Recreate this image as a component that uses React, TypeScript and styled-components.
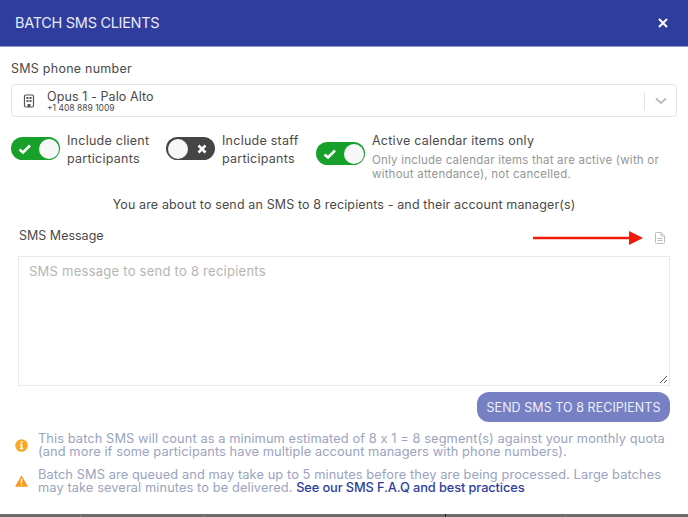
import React from "react";
import styled, { createGlobalStyle } from "styled-components";

const Global = createGlobalStyle`
  html, body { margin: 0; padding: 0; background: #fff; }
  body { font-family: Inter, "Open Sans", "Liberation Sans", sans-serif; }
  * { box-sizing: border-box; }
`;

const Page = styled.div`
  width: 688px;
  height: 517px;
  display: flex;
  flex-direction: column;
  overflow: hidden;
  background: #fff;
`;

const Header = styled.header`
  height: 47px;
  flex: none;
  background: #2f3e9e;
  border-bottom: 1px solid #8f98d0;
  display: flex;
  align-items: center;
  justify-content: space-between;
  padding: 0 17px 1px 15px;
  color: #e8eaf6;
  font-size: 14.5px;
  letter-spacing: -0.3px;
`;

const CloseButton = styled.span`
  display: flex;
  width: 16px;
  height: 16px;
  color: #fff;
`;

const Body = styled.main`
  flex: 1;
  display: flex;
  flex-direction: column;
  padding: 14px 11px 0;
`;

const FieldLabel = styled.div`
  font-size: 12.5px;
  line-height: 16px;
  color: #4a4a4a;
  letter-spacing: 0.25px;
`;

const Select = styled.div`
  margin-top: 7px;
  height: 33px;
  border: 1px solid #e4e4e4;
  border-radius: 4px;
  display: flex;
  align-items: center;
  padding-left: 12px;
`;

const SelectIcon = styled.span`
  display: flex;
  width: 12px;
  height: 14px;
  margin-left: -1px;
  margin-right: 12px;
  color: #555;
`;

const SelectText = styled.div`
  flex: 1;
  display: flex;
  flex-direction: column;
  padding-top: 2px;
  color: #4a4a4a;
`;

const SelectName = styled.div`
  font-size: 12.5px;
  line-height: 12px;
  letter-spacing: 0.1px;
`;

const SelectPhone = styled.div`
  font-size: 8.5px;
  line-height: 9px;
  margin-top: 1px;
`;

const Chevron = styled.div`
  width: 32px;
  height: 18px;
  border-left: 1px solid #e4e4e4;
  display: flex;
  align-items: center;
  justify-content: center;
  color: #bdbdbd;
`;

const OptionsRow = styled.div`
  display: flex;
  margin-top: 14px;
  height: 52px;
`;

const Option = styled.div<{ $width: number }>`
  width: ${(p) => p.$width}px;
  flex: none;
  display: flex;
  align-items: flex-start;
  gap: 7px;
`;

const Track = styled.div<{ $on: boolean; $top: number }>`
  width: 49px;
  height: 23px;
  flex: none;
  margin-top: ${(p) => p.$top}px;
  border-radius: 12px;
  background: ${(p) => (p.$on ? "#17a12b" : "#454545")};
  display: flex;
  flex-direction: ${(p) => (p.$on ? "row" : "row-reverse")};
  align-items: center;
  justify-content: space-between;
  padding: 0 1.5px;
  color: #fff;
`;

const Knob = styled.div`
  width: 20px;
  height: 20px;
  border-radius: 50%;
  background: #f7f7f7;
`;

const MarkSlot = styled.span`
  display: flex;
  width: 24px;
  justify-content: center;
`;

const OptionTitle = styled.div`
  padding-top: 1px;
  font-size: 12.5px;
  line-height: 18px;
  color: #4a4a4a;
  letter-spacing: 0.25px;
`;

const OptionHint = styled.div`
  font-size: 11.5px;
  line-height: 14px;
  margin-top: 3px;
  color: #969696;
  letter-spacing: 0.22px;
`;

const Notice = styled.div`
  margin-top: 14px;
  text-align: center;
  font-size: 12.5px;
  line-height: 16px;
  color: #4a4a4a;
  letter-spacing: 0.13px;
`;

const MessageHead = styled.div`
  display: flex;
  align-items: center;
  height: 16px;
  margin-top: 15px;
  padding: 0 12px 0 8px;
`;

const MessageLabel = styled(FieldLabel)`
  flex: 1;
  letter-spacing: 0;
`;

const DocIcon = styled.span`
  display: flex;
  margin-left: 12px;
  margin-top: 3px;
  color: #bdbdbd;
`;

const ArrowMark = styled.span`
  display: flex;
  margin-top: 3px;
`;

const MessageBox = styled.div`
  margin: 12px 7px 0;
  height: 130px;
  border: 1px solid #e8e8e8;
  padding: 6px 10px;
  font-size: 13px;
  line-height: 16px;
  color: #b5b5b5;
  letter-spacing: 0.25px;
  position: relative;
`;

const Grip = styled.span`
  position: absolute;
  right: 1px;
  bottom: 1px;
  display: flex;
  color: #555;
`;

const Actions = styled.div`
  display: flex;
  justify-content: flex-end;
  margin: 6px 7px 0;
`;

const SendButton = styled.div`
  width: 193px;
  height: 30px;
  border-radius: 12px;
  background: #7880c4;
  color: #eceef8;
  font-size: 12.5px;
  display: flex;
  align-items: center;
  justify-content: center;
  letter-spacing: 0.05px;
`;

const NoteList = styled.div`
  display: flex;
  flex-direction: column;
  gap: 10px;
  margin-top: 10px;
  padding-left: 4px;
`;

const Note = styled.div`
  display: flex;
  align-items: center;
  gap: 10px;
`;

const NoteIcon = styled.span`
  display: flex;
  flex: none;
  width: 13px;
  justify-content: center;
`;

const NoteText = styled.div`
  font-size: 12.8px;
  line-height: 13px;
  color: #9aa3bf;
  letter-spacing: 0.1px;
  white-space: nowrap;
`;

const NoteLink = styled.a`
  color: #2f3e9e;
  font-weight: 500;
  letter-spacing: -0.1px;
  text-decoration: none;
`;

const BottomStrip = styled.div`
  flex: none;
  height: 3px;
  background: #6b6b6b;
  display: flex;
`;

const Tick = styled.span<{ $gap: number; $dark?: boolean }>`
  width: 1px;
  height: 3px;
  margin-left: ${(p) => p.$gap}px;
  background: ${(p) => (p.$dark ? "#222" : "#7c7c7c")};
`;

const Check = () => (
  <svg width="14" height="12" viewBox="0 0 14 12" fill="none" stroke="currentColor" strokeWidth="2.6">
    <path d="M1.5 6.5 L5 9.5 L12 2.5" />
  </svg>
);

const Cross = () => (
  <svg width="10" height="10" viewBox="0 0 10 10" fill="none" stroke="currentColor" strokeWidth="2.6">
    <path d="M1.5 1.5 L8.5 8.5 M8.5 1.5 L1.5 8.5" />
  </svg>
);

const Toggle = ({ on, top }: { on: boolean; top: number }) => (
  <Track $on={on} $top={top}>
    <MarkSlot>{on ? <Check /> : <Cross />}</MarkSlot>
    <Knob />
  </Track>
);

export default function App() {
  return (
    <Page>
      <Global />
      <Header>
        BATCH SMS CLIENTS
        <CloseButton>
          <svg width="16" height="16" viewBox="0 0 16 16" fill="none" stroke="currentColor" strokeWidth="2">
            <path d="M4 4 L12 12 M12 4 L4 12" />
          </svg>
        </CloseButton>
      </Header>
      <Body>
        <FieldLabel>SMS phone number</FieldLabel>
        <Select>
          <SelectIcon>
            <svg width="12" height="14" viewBox="0 0 12 14" fill="none">
              <rect x="1.5" y="1" width="9" height="12" rx="1.2" stroke="currentColor" strokeWidth="1.2" />
              <path d="M3.5 3h2v2h-2zM6.5 3h2v2h-2zM3.5 6h2v2h-2zM6.5 6h2v2h-2zM4.5 10h3v3h-3z" fill="currentColor" />
            </svg>
          </SelectIcon>
          <SelectText>
            <SelectName>Opus 1 - Palo Alto</SelectName>
            <SelectPhone>+1 408 889 1009</SelectPhone>
          </SelectText>
          <Chevron>
            <svg width="12" height="8" viewBox="0 0 12 8" fill="none" stroke="currentColor" strokeWidth="2">
              <path d="M1 1.5 L6 6 L11 1.5" />
            </svg>
          </Chevron>
        </Select>
        <OptionsRow>
          <Option $width={155}>
            <Toggle on top={6} />
            <OptionTitle>
              Include client
              <br />
              participants
            </OptionTitle>
          </Option>
          <Option $width={150}>
            <Toggle on={false} top={6} />
            <OptionTitle>
              Include staff
              <br />
              participants
            </OptionTitle>
          </Option>
          <Option $width={355}>
            <Toggle on top={11} />
            <div>
              <OptionTitle>Active calendar items only</OptionTitle>
              <OptionHint>
                Only include calendar items that are active (with or
                <br />
                without attendance), not cancelled.
              </OptionHint>
            </div>
          </Option>
        </OptionsRow>
        <Notice>You are about to send an SMS to 8 recipients - and their account manager(s)</Notice>
        <MessageHead>
          <MessageLabel>SMS Message</MessageLabel>
          <ArrowMark>
            <svg width="110" height="14" viewBox="0 0 110 14">
              <path d="M0 5.800h97v2.500H0z" fill="#f01a0a" />
              <path d="M96 0 L110 7 L96 14 Z" fill="#f01a0a" />
            </svg>
          </ArrowMark>
          <DocIcon>
            <svg width="10" height="12" viewBox="0 0 10 12" fill="none" stroke="currentColor" strokeWidth="1">
              <path d="M1.5.5h4.5l3.500 3.500v6.500a1 1 0 0 1-1 1h-7a1 1 0 0 1-1-1v-9a1 1 0 0 1 1-1z" />
              <path d="M6 .5v3.500h3.500M2.500 6.500h5M2.500 8.500h5" />
            </svg>
          </DocIcon>
        </MessageHead>
        <MessageBox>
          SMS message to send to 8 recipients
          <Grip>
            <svg width="9" height="9" viewBox="0 0 9 9" fill="none" stroke="currentColor" strokeWidth="1">
              <path d="M1 8 L8 1 M5 8 L8 5" />
            </svg>
          </Grip>
        </MessageBox>
        <Actions>
          <SendButton>SEND SMS TO 8 RECIPIENTS</SendButton>
        </Actions>
        <NoteList>
          <Note>
            <NoteIcon>
              <svg width="13" height="13" viewBox="0 0 13 13">
                <circle cx="6.5" cy="6.500" r="6.300" fill="#f9a825" />
                <path d="M5.600 2.500h1.800v1.700H5.600zM5 5.300h2.400v3.600h.8v1.300H4.900V8.900h.8V6.600H5z" fill="#fff" />
              </svg>
            </NoteIcon>
            <NoteText>
              This batch SMS will count as a minimum estimated of 8 x 1 = 8 segment(s) against your monthly quota
              <br />
              (and more if some participants have multiple account managers with phone numbers).
            </NoteText>
          </Note>
          <Note>
            <NoteIcon>
              <svg width="13" height="12" viewBox="0 0 13 12">
                <path d="M6.500.3 L13 11.700 H0 Z" fill="#f9991f" />
                <path d="M5.800 3.800h1.400v4.200H5.800zM5.800 8.800h1.400v1.400H5.800z" fill="#fff" />
              </svg>
            </NoteIcon>
            <NoteText>
              Batch SMS are queued and may take up to 5 minutes before they are being processed. Large batches
              <br />
              may take several minutes to be delivered. <NoteLink href="#">See our SMS F.A.Q and best practices</NoteLink>
            </NoteText>
          </Note>
        </NoteList>
      </Body>
      <BottomStrip>
        <Tick $gap={80} />
        <Tick $gap={122} />
        <Tick $gap={241} $dark />
        <Tick $gap={119} />
      </BottomStrip>
    </Page>
  );
}
